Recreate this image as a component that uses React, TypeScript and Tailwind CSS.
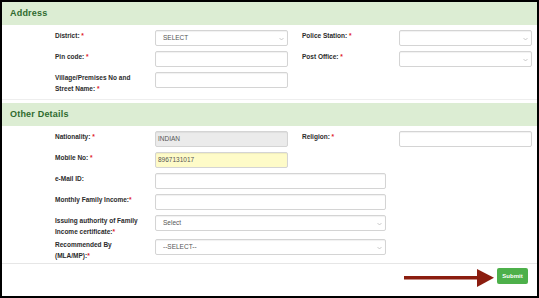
import React from 'react';

type Field = {
  label: string[];
  required?: boolean;
  tight?: boolean;
  kind: 'select' | 'input';
  value?: string;
  wide?: boolean;
  bg?: string;
};

type Row = {
  left: Field;
  right?: Field;
  mt: string;
};

const Chevron = () => (
  <svg width="5" height="4" viewBox="0 0 5 4" className="absolute right-[3px] top-[6px]">
    <path d="M0.5 1 L2.5 3 L4.5 1" fill="none" stroke="#a8a8a8" strokeWidth="0.6" />
  </svg>
);

const Label = ({ f, w }: { f: Field; w: string }) => (
  <div className={`${w} shrink-0 text-[6.5px] font-bold leading-[11px] text-[#2b2b2b]`}>
    {f.label.map((l, i) => (
      <div key={i}>
        {l}
        {i === f.label.length - 1 && f.required ? (
          <span className="text-[#e0202a]">{f.tight ? '*' : ' *'}</span>
        ) : null}
      </div>
    ))}
  </div>
);

const Box = ({ f }: { f: Field }) => (
  <div
    className={`relative h-[16px] ${f.wide ? 'w-[231px]' : 'w-[133px]'} shrink-0 rounded-[2px] border border-[#d4d4d4] shadow-[inset_0_1px_1px_rgba(0,0,0,0.06)] flex items-center text-[6.5px] text-[#555] ${
      f.kind === 'select' ? 'pl-[7px]' : 'pl-[2px]'
    } ${f.bg ?? 'bg-white'}`}
  >
    {f.value}
    {f.kind === 'select' ? <Chevron /> : null}
  </div>
);

const FormRow = ({ row }: { row: Row }) => (
  <div className={`flex h-[16px] pl-[53px] ${row.mt}`}>
    <Label f={row.left} w="w-[100px]" />
    <Box f={row.left} />
    {row.right ? (
      <>
        <div className="w-[14px] shrink-0" />
        <Label f={row.right} w="w-[97px]" />
        <Box f={row.right} />
      </>
    ) : null}
  </div>
);

const Header = ({ title }: { title: string }) => (
  <div className="h-[23px] bg-[#dcedd3] flex items-center pl-[8px] text-[9px] font-bold text-[#2f6b2f] tracking-[0.2px]">
    {title}
  </div>
);

const addressRows: Row[] = [
  {
    left: { label: ['District:'], required: true, kind: 'select', value: 'SELECT' },
    right: { label: ['Police Station:'], required: true, kind: 'select' },
    mt: 'mt-[5px]',
  },
  {
    left: { label: ['Pin code:'], required: true, kind: 'input' },
    right: { label: ['Post Office:'], required: true, kind: 'select' },
    mt: 'mt-[5px]',
  },
  {
    left: { label: ['Village/Premises No and', 'Street Name:'], required: true, kind: 'input' },
    mt: 'mt-[5px]',
  },
];

const otherRows: Row[] = [
  {
    left: { label: ['Nationality:'], required: true, kind: 'input', value: 'INDIAN', bg: 'bg-[#ebebeb]' },
    right: { label: ['Religion:'], required: true, kind: 'input' },
    mt: 'mt-[5px]',
  },
  {
    left: { label: ['Mobile No:'], required: true, kind: 'input', value: '8967131017', bg: 'bg-[#fefbc8]' },
    mt: 'mt-[5px]',
  },
  {
    left: { label: ['e-Mail ID:'], kind: 'input', wide: true },
    mt: 'mt-[5px]',
  },
  {
    left: { label: ['Monthly Family Income:'], required: true, tight: true, kind: 'input', wide: true },
    mt: 'mt-[5px]',
  },
  {
    left: { label: ['Issuing authority of Family', 'Income certificate:'], required: true, tight: true, kind: 'select', value: 'Select', wide: true },
    mt: 'mt-[5px]',
  },
  {
    left: { label: ['Recommended By', '(MLA/MP):'], required: true, tight: true, kind: 'select', value: '--SELECT--', wide: true },
    mt: 'mt-[8px]',
  },
];

export default function App() {
  return (
    <div className="w-[539px] h-[298px] border-2 border-black bg-white flex flex-col font-['Liberation_Sans',Arial,sans-serif]">
      <Header title="Address" />
      <div className="pb-[11px] border-b border-[#eeeeee]">
        {addressRows.map((r, i) => (
          <FormRow key={i} row={r} />
        ))}
      </div>
      <div className="mt-[3px]">
        <Header title="Other Details" />
      </div>
      <div className="pb-[8px] border-b border-[#e6e6e6]">
        {otherRows.map((r, i) => (
          <FormRow key={i} row={r} />
        ))}
      </div>
      <div className="flex items-start justify-end pt-[4px] pr-[9px]">
        <svg width="92" height="20" viewBox="0 0 92 20" className="mr-[1px]">
          <rect x="0" y="8" width="76" height="3.5" fill="#8b1d0f" />
          <polygon points="73,1 90,9.8 73,19" fill="#8b1d0f" />
        </svg>
        <button className="h-[16px] w-[31px] rounded-[2px] bg-[#4db04a] text-white text-[6px] font-bold">Submit</button>
      </div>
    </div>
  );
}
